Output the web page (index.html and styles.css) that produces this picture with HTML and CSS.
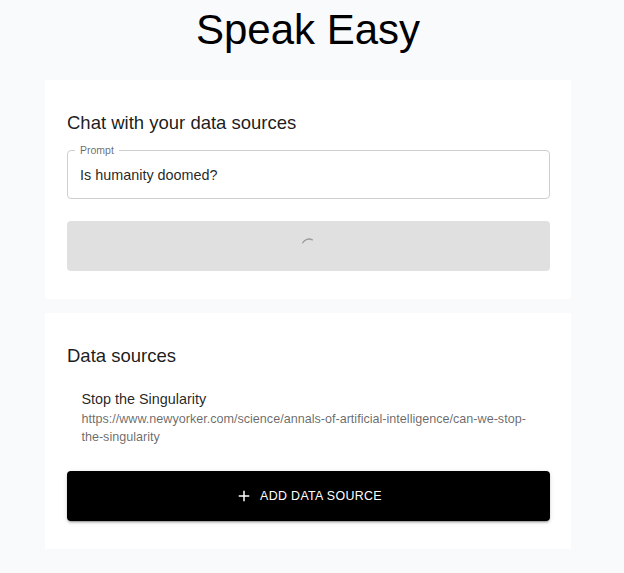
FILE: index.html
```html
<!DOCTYPE html>
<html lang="en">
<head>
<meta charset="utf-8">
<title>Speak Easy</title>
<link rel="stylesheet" href="styles.css">
</head>
<body>
<main class="page">
  <h1 class="title">Speak Easy</h1>

  <section class="card">
    <h2 class="card-heading">Chat with your data sources</h2>
    <div class="field">
      <fieldset class="field-outline"><legend class="field-legend">Prompt</legend></fieldset>
      <div class="field-input">Is humanity doomed?</div>
    </div>
    <div class="btn btn-loading">
      <svg class="spinner" width="16" height="16" viewBox="0 0 16 16"><path d="M1.76 4.82 A7 7 0 0 1 11.29 1.82" fill="none" stroke="#9a9a9a" stroke-width="1.3" stroke-linecap="round"/></svg>
    </div>
  </section>

  <section class="card">
    <h2 class="card-heading">Data sources</h2>
    <ul class="list">
      <li class="list-item">
        <div class="item-primary">Stop the Singularity</div>
        <div class="item-secondary">https://www.newyorker.com/science/annals-of-artificial-intelligence/can-we-stop-the-singularity</div>
      </li>
    </ul>
    <div class="btn btn-primary">
      <svg class="btn-icon" width="18" height="18" viewBox="0 0 24 24"><path d="M19 13h-6v6h-2v-6H5v-2h6V5h2v6h6v2z" fill="#fff"/></svg>
      <span class="btn-label">Add data source</span>
    </div>
  </section>
</main>
</body>
</html>
```

FILE: styles.css
```css
html, body {
  margin: 0;
  padding: 0;
  background: #f9fafb;
  font-family: "Liberation Sans", Arial, Helvetica, sans-serif;
  color: #000;
}

.page {
  width: 526px;
  margin-left: 45px;
  display: flex;
  flex-direction: column;
}

.title {
  margin: 0;
  padding-top: 6px;
  height: 80px;
  box-sizing: border-box;
  font-size: 42px;
  line-height: 48px;
  font-weight: 400;
  text-align: center;
  color: #000;
}

.card {
  background: #fff;
  padding: 29px 21px 28px 22px;
  display: flex;
  flex-direction: column;
  margin-bottom: 14px;
}

.card-heading {
  margin: 0;
  font-size: 18.5px;
  line-height: 28.8px;
  font-weight: 400;
  color: rgba(0, 0, 0, 0.9);
}

.field {
  position: relative;
  margin-top: 13.5px;
  height: 48px;
}

.field-outline {
  position: absolute;
  inset: -6px 0 0 0;
  margin: 0;
  padding: 0 7px;
  border: 1px solid #cfcfcf;
  border-radius: 4px;
  pointer-events: none;
}

.field-legend {
  padding: 0 5px;
  font-size: 10.5px;
  line-height: 11px;
  color: rgba(0, 0, 0, 0.6);
}

.field-input {
  height: 48px;
  display: flex;
  align-items: center;
  padding-left: 13px;
  font-size: 14.4px;
  color: rgba(0, 0, 0, 0.87);
}

.btn {
  height: 50px;
  border-radius: 4px;
  display: flex;
  align-items: center;
  justify-content: center;
}

.btn-loading {
  margin-top: 21.5px;
  background: #e0e0e0;
}

.spinner {
  display: block;
}

.list {
  list-style: none;
  margin: 0;
  padding: 7.2px 0;
}

.list-item {
  padding: 10.8px 14.4px;
}

.item-primary {
  font-size: 14.4px;
  line-height: 21.6px;
  color: rgba(0, 0, 0, 0.87);
}

.item-secondary {
  font-size: 12.6px;
  line-height: 18px;
  color: rgba(0, 0, 0, 0.6);
}

.btn-primary {
  margin-top: 7px;
  background: #000;
  color: #fff;
  box-shadow: 0 3px 1px -2px rgba(0,0,0,0.2), 0 2px 2px 0 rgba(0,0,0,0.14), 0 1px 5px 0 rgba(0,0,0,0.12);
}

.btn-icon {
  display: block;
  margin-right: 7px;
}

.btn-label {
  font-size: 12.4px;
  letter-spacing: 0.35px;
  text-transform: uppercase;
  font-weight: 400;
}
```
